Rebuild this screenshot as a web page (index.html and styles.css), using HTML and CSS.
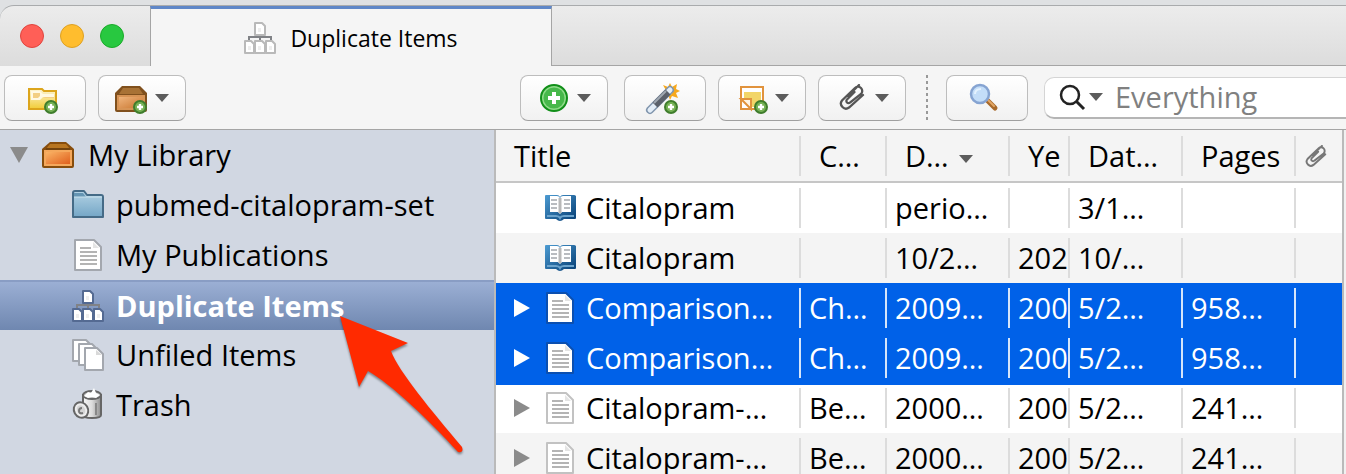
FILE: index.html
```html
<!DOCTYPE html>
<html lang="en">
<head>
    <meta charset="UTF-8">
    <meta name="viewport" content="width=device-width, initial-scale=1.0">
    <title>Duplicate Items</title>
    <link rel="stylesheet" href="styles.css">
</head>
<body>
    <!-- Shared icons -->
    <svg class="sprite" aria-hidden="true">
        <defs>
            <linearGradient id="g-orange" x1="0" y1="0" x2="1" y2="1">
                <stop offset="0" stop-color="#fbb466"/><stop offset="1" stop-color="#df5f1c"/>
            </linearGradient>
            <linearGradient id="g-brown" x1="0" y1="0" x2="1" y2="1">
                <stop offset="0" stop-color="#efb47c"/><stop offset="1" stop-color="#c9762f"/>
            </linearGradient>
            <linearGradient id="g-blue" x1="0" y1="0" x2="0" y2="1">
                <stop offset="0" stop-color="#b4d3e5"/><stop offset="1" stop-color="#74a6c6"/>
            </linearGradient>
            <linearGradient id="g-book" x1="0" y1="0" x2="1" y2="1">
                <stop offset="0" stop-color="#4c9bd2"/><stop offset="1" stop-color="#063e74"/>
            </linearGradient>
            <linearGradient id="g-yellow" x1="0" y1="0" x2="0" y2="1">
                <stop offset="0" stop-color="#fdf6d8"/><stop offset="1" stop-color="#f1cc35"/>
            </linearGradient>
            <linearGradient id="g-metal" x1="0" y1="0" x2="1" y2="0">
                <stop offset="0" stop-color="#f7f7f7"/><stop offset="0.5" stop-color="#dcdcdc"/><stop offset="1" stop-color="#8e8e8e"/>
            </linearGradient>
        </defs>
        <symbol id="badge" viewBox="0 0 14 14">
            <circle cx="7" cy="7" r="6" fill="#76b255" stroke="#3f7d2c" stroke-width="2"/>
            <path d="M7 4v6M4 7h6" stroke="#fff" stroke-width="2.4"/>
        </symbol>
        <symbol id="doc" viewBox="0 0 32 32">
            <path d="M3 1h19l7 7v23H3z" fill="#fff" stroke="currentColor" stroke-width="2" stroke-linejoin="round"/>
            <path d="M21 3v6h6z" fill="#e4e4e4"/>
            <path d="M8 9h11M8 13h17M8 17h17M8 21h17M8 25h17" stroke="#b4b4b4" stroke-width="1.8"/>
        </symbol>
        <symbol id="duplicates" viewBox="0 0 32 32">
            <path d="M5 19v-4h22v4M16 12v7" fill="none" stroke="#808286" stroke-width="2"/>
            <g fill="#fff" stroke="currentColor" stroke-width="2" stroke-linejoin="round">
                <path d="M11 1h7l3 3v9H11z"/>
                <path d="M1 19h6l3 3v9H1z"/>
                <path d="M11 19h7l3 3v9H11z"/>
                <path d="M22 19h6l3 3v9h-9z"/>
            </g>
            <path d="M14 6h3v4h-3zM4 24h3v4H4zM14 24h3v4h-3zM25 24h3v4h-3z" fill="#eee"/>
        </symbol>
        <symbol id="book" viewBox="0 0 32 28">
            <path d="M1 2q0-1 1-1h11q2 0 3 2 1-2 3-2h11q1 0 2 1v22q0 1-1 1H20q-2 2-4 2t-4-2H2q-1 0-1-1z" fill="url(#g-book)"/>
            <path d="M6 2h7q2 0 3 2 1-2 3-2h8v16h-9l-2 2-2-2H6z" fill="#fff"/>
            <path d="M16 4v15" stroke="#b8b8b8" stroke-width="3"/>
            <path d="M7 6h6M7 10h6M7 14h6M20 6h6M20 10h6M20 14h6" stroke="#b9bcc0" stroke-width="2"/>
            <path d="M3 22h9q3 0 4 2 1-2 4-2h10" fill="none" stroke="#6ca4cd" stroke-width="2"/>
        </symbol>
        <symbol id="clip" viewBox="0 0 26 26">
            <path d="M15.500 8 8 15.500a2 2 0 0 0 3 3L22 10a4 4 0 0 0-6-6L3 16.500a5 5 0 0 0 7 7L24 11M20 1 9 12" fill="none" stroke="currentColor" stroke-width="2.300" stroke-linecap="round"/>
        </symbol>
        <symbol id="down" viewBox="0 0 14 8">
            <path d="M0 0h14L7 8z" fill="currentColor"/>
        </symbol>
    </svg>

    <header class="titlebar">
        <div class="window-controls">
            <button class="light close" aria-label="Close"></button>
            <button class="light minimize" aria-label="Minimize"></button>
            <button class="light maximize" aria-label="Zoom"></button>
        </div>
        <button class="tab">
            <svg class="icon tab-icon"><use href="#duplicates"/></svg>
            Duplicate Items
        </button>
        <div class="tab-rest"></div>
    </header>

    <div class="toolbar">
        <div class="toolbar-left">
            <button class="tool" aria-label="New Collection">
                <svg class="icon" viewBox="0 0 32 32">
                    <path d="M0 7h13l2 2h12v18H0z" fill="url(#g-yellow)" stroke="#dca51c" stroke-width="2"/>
                    <path d="M2 9h9l3 3h11v3H14l-3 3H2z" fill="#fff9e2"/>
                    <path d="M4 11h7v3l-2 2H4zM14 16h11v-1H16z" fill="#f3cf83"/>
                    <use href="#badge" x="15" y="18" width="14" height="14"/>
                </svg>
            </button>
            <button class="tool tool-menu" aria-label="New Library">
                <svg class="icon" viewBox="0 0 32 32">
                    <path d="M7 4h18l7 7v17q0 2-2 2H2q-2 0-2-2V11z" fill="#80501d"/>
                    <path d="M8 6h16l4 6H4z" fill="#a87235"/>
                    <path d="M2 13h28v15H2z" fill="#d79455"/>
                    <path d="M4 15h24v11H4z" fill="url(#g-brown)"/>
                    <use href="#badge" x="18" y="18" width="14" height="14"/>
                </svg>
                <svg class="arrow"><use href="#down"/></svg>
            </button>
        </div>
        <div class="toolbar-right">
            <button class="tool tool-menu" aria-label="New Item">
                <svg class="icon" viewBox="0 0 32 32">
                    <circle cx="17" cy="16" r="13" fill="#8edb88" stroke="#118f19" stroke-width="2"/>
                    <circle cx="17" cy="16" r="10.500" fill="#47b84b"/>
                    <path d="M17 10v12M11 16h12" stroke="#fff" stroke-width="4"/>
                </svg>
                <svg class="arrow"><use href="#down"/></svg>
            </button>
            <button class="tool" aria-label="Add Item by Identifier">
                <svg class="icon" viewBox="0 0 32 32">
                    <path d="M14 3l5 2 2-4 2 4 5-3-1 5 4 2-4 2 2 5-6-2-2 4-2-6z" fill="#f7a81c"/>
                    <path d="M19 5l4-1 2 4-3 5z" fill="#ffe35b"/>
                    <path d="M1 28 21 8" stroke="#8095ad" stroke-width="8" stroke-linecap="round"/>
                    <path d="M1 28 21 8" stroke="#e4eef8" stroke-width="5" stroke-linecap="round"/>
                    <path d="M6 23 19 10" stroke="#5b616b" stroke-width="7"/>
                    <path d="M5 21 17 9" stroke="#a0a8b2" stroke-width="2"/>
                    <use href="#badge" x="15" y="18" width="14" height="14"/>
                </svg>
            </button>
            <button class="tool tool-menu" aria-label="New Note">
                <svg class="icon" viewBox="0 0 32 32">
                    <path d="M6 5h22v22H6z" fill="#fff" stroke="#e1933d" stroke-width="2"/>
                    <path d="M9 10h17v15H17V17H9z" fill="#f2d568"/>
                    <path d="M6 17h10v10z" fill="#fff4e2" stroke="#e1933d" stroke-width="2"/>
                    <use href="#badge" x="19" y="18" width="14" height="14"/>
                </svg>
                <svg class="arrow"><use href="#down"/></svg>
            </button>
            <button class="tool tool-menu" aria-label="Add Attachment">
                <svg class="icon dark" viewBox="0 0 32 32"><use href="#clip" x="4" y="2" width="26" height="26"/></svg>
                <svg class="arrow"><use href="#down"/></svg>
            </button>
            <div class="separator"></div>
            <button class="tool" aria-label="Advanced Search">
                <svg class="icon" viewBox="0 0 32 32">
                    <path d="m16 18 8 8" stroke="#a86a2c" stroke-width="5" stroke-linecap="round"/>
                    <path d="m17 18 6 6" stroke="#e3a765" stroke-width="2" stroke-linecap="round"/>
                    <circle cx="9" cy="12" r="9" fill="#c3ddf8" stroke="#86a4d2" stroke-width="2.500"/>
                    <path d="M4 12q0-5 6-5" fill="none" stroke="#e4f2ff" stroke-width="2"/>
                </svg>
            </button>
            <label class="search">
                <svg class="search-icon" viewBox="0 0 26 26">
                    <circle cx="11" cy="11" r="9" fill="none" stroke="#222" stroke-width="2.500"/>
                    <path d="m17 17 8 8" stroke="#222" stroke-width="3"/>
                </svg>
                <svg class="arrow"><use href="#down"/></svg>
                <input class="search-input" type="text" placeholder="Everything" aria-label="Search">
            </label>
        </div>
    </div>

    <main class="panes">
        <nav class="sidebar">
            <a class="source root" href="#">
                <svg class="twisty" viewBox="0 0 18 16"><path d="M0 0h18L9 16z" fill="#8b8b8b"/></svg>
                <svg class="icon" viewBox="0 0 32 32">
                    <path d="M8 3h16l8 7v17q0 2-2 2H2q-2 0-2-2V10z" fill="#874d0c"/>
                    <path d="M8 5h16l4 5H4z" fill="#b8751f"/>
                    <path d="M2 11h28v16H2z" fill="#f5a85c"/>
                    <path d="M4 13h24v12H4z" fill="url(#g-orange)"/>
                    <path d="M4 9h24v2H4z" fill="#73420b"/>
                </svg>
                My Library
            </a>
            <a class="source" href="#">
                <svg class="icon" viewBox="0 0 32 32">
                    <path d="M1 28V4q0-2 2-2h9l3 4h14q2 0 2 2v20z" fill="url(#g-blue)" stroke="#456b87" stroke-width="2" stroke-linejoin="round"/>
                    <path d="M2 4h9l3 4H2z" fill="#6595b3"/>
                    <path d="M2 8h28" stroke="#cbe2ee"/>
                </svg>
                pubmed-citalopram-set
            </a>
            <a class="source" href="#">
                <svg class="icon doc-gray"><use href="#doc"/></svg>
                My Publications
            </a>
            <a class="source selected" href="#" aria-current="page">
                <svg class="icon"><use href="#duplicates"/></svg>
                Duplicate Items
            </a>
            <a class="source" href="#">
                <svg class="icon" viewBox="0 0 32 32">
                    <g fill="#fff" stroke="#a3a7ae" stroke-width="2" stroke-linejoin="round">
                        <path d="M1 1h13l5 5v16H1z"/>
                        <path d="M7 5h13l5 5v16H7z"/>
                        <path d="M13 9h12l6 6v16H13z"/>
                    </g>
                    <path d="M24 11v5h6z" fill="#d9d9d9"/>
                </svg>
                Unfiled Items
            </a>
            <a class="source" href="#">
                <svg class="icon" viewBox="0 0 32 32">
                    <path d="M11 6v20q0 3 9 3t9-3V6z" fill="url(#g-metal)" stroke="#666" stroke-width="2"/>
                    <ellipse cx="20" cy="6" rx="9" ry="4" fill="#bbb" stroke="#666" stroke-width="2"/>
                    <path d="m12 7 4-4 3 1 3-5 2 5 4 2-4 3-4-1-4 1z" fill="#fff"/>
                    <path d="M24 14v12" stroke="#888" stroke-width="2"/>
                    <ellipse cx="9" cy="21" rx="7" ry="8" transform="rotate(-30 9 21)" fill="#eee" stroke="#666" stroke-width="2"/>
                    <ellipse cx="9" cy="21" rx="4" ry="5" transform="rotate(-30 9 21)" fill="#d5d5d5"/>
                    <path d="M10 19q-3 0-3 3t4 2" fill="none" stroke="#777" stroke-width="2"/>
                </svg>
                Trash
            </a>
            <svg class="pointer" viewBox="0 0 130 144">
                <path d="M3 4 71 31 54 39C62 60 94 98 125 135Q127 141 121 140 C92 108 54 72 31 59L22 75z" fill="#ff2a00"/>
            </svg>
        </nav>

        <section class="items">
            <table>
                <colgroup>
                    <col>
                    <col class="col-creator">
                    <col class="col-date">
                    <col class="col-year">
                    <col class="col-added">
                    <col class="col-pages">
                    <col class="col-clip">
                </colgroup>
                <thead>
                    <tr>
                        <th>Title</th>
                        <th>C…</th>
                        <th>D…<svg class="arrow sort"><use href="#down"/></svg></th>
                        <th>Ye</th>
                        <th>Dat…</th>
                        <th>Pages</th>
                        <th class="clip-head"><svg class="clip-icon" role="img" aria-label="Attachments"><use href="#clip"/></svg></th>
                    </tr>
                </thead>
                <tbody>
                    <tr>
                        <td><div class="title"><span class="expander"></span><svg class="icon book"><use href="#book"/></svg>Citalopram</div></td>
                        <td></td>
                        <td>perio…</td>
                        <td></td>
                        <td>3/1…</td>
                        <td></td>
                        <td></td>
                    </tr>
                    <tr>
                        <td><div class="title"><span class="expander"></span><svg class="icon book"><use href="#book"/></svg>Citalopram</div></td>
                        <td></td>
                        <td>10/2…</td>
                        <td>202</td>
                        <td>10/…</td>
                        <td></td>
                        <td></td>
                    </tr>
                    <tr class="selected">
                        <td><div class="title"><button class="expander" aria-label="Expand"><svg viewBox="0 0 16 18"><path d="M0 0v18l16-9z"/></svg></button><svg class="icon"><use href="#doc"/></svg>Comparison…</div></td>
                        <td>Ch…</td>
                        <td>2009…</td>
                        <td>200</td>
                        <td>5/2…</td>
                        <td>958…</td>
                        <td></td>
                    </tr>
                    <tr class="selected">
                        <td><div class="title"><button class="expander" aria-label="Expand"><svg viewBox="0 0 16 18"><path d="M0 0v18l16-9z"/></svg></button><svg class="icon"><use href="#doc"/></svg>Comparison…</div></td>
                        <td>Ch…</td>
                        <td>2009…</td>
                        <td>200</td>
                        <td>5/2…</td>
                        <td>958…</td>
                        <td></td>
                    </tr>
                    <tr>
                        <td><div class="title"><button class="expander" aria-label="Expand"><svg viewBox="0 0 16 18"><path d="M0 0v18l16-9z"/></svg></button><svg class="icon"><use href="#doc"/></svg>Citalopram-…</div></td>
                        <td>Be…</td>
                        <td>2000…</td>
                        <td>200</td>
                        <td>5/2…</td>
                        <td>241…</td>
                        <td></td>
                    </tr>
                    <tr>
                        <td><div class="title"><button class="expander" aria-label="Expand"><svg viewBox="0 0 16 18"><path d="M0 0v18l16-9z"/></svg></button><svg class="icon"><use href="#doc"/></svg>Citalopram-…</div></td>
                        <td>Be…</td>
                        <td>2000…</td>
                        <td>200</td>
                        <td>5/2…</td>
                        <td>241…</td>
                        <td></td>
                    </tr>
                </tbody>
            </table>
        </section>
    </main>
</body>
</html>
```
FILE: styles.css
```css
* { box-sizing: border-box; }

body {
    margin: 0;
    height: 100vh;
    overflow: hidden;
    display: flex;
    flex-direction: column;
    padding-top: 5px;
    background: #dfe1e3;
    color: #000;
    font-family: "Open Sans", "Noto Sans", sans-serif;
    font-size: 29px;
    line-height: 40px;
}

button {
    margin: 0;
    padding: 0;
    border: none;
    background: none;
    color: inherit;
    font: inherit;
}

svg { flex: none; overflow: visible; }

.sprite { position: absolute; width: 0; height: 0; }

.icon { width: 32px; height: 32px; }

.arrow { width: 14px; height: 8px; color: #5c5c5c; }

.dark { color: #555; }

/* Title bar */
.titlebar {
    display: flex;
    flex: none;
    height: 61px;
    border-top: 1px solid #a9abad;
    border-top-left-radius: 14px;
    background: linear-gradient(#ececec, #dcdcdc);
    overflow: hidden;
}

.window-controls {
    display: flex;
    align-items: center;
    gap: 16px;
    width: 150px;
    padding-left: 20px;
}

.light {
    width: 24px;
    height: 24px;
    border: 1px solid #e0443e;
    border-radius: 50%;
    background: #ff5f57;
}

.minimize { border-color: #dea123; background: #ffbd2e; }

.maximize { border-color: #1aab29; background: #28c840; }

.tab {
    display: flex;
    align-items: center;
    justify-content: center;
    gap: 14px;
    width: 402px;
    border: 1px solid #a5a5a5;
    border-top: 3px solid #5f87c8;
    border-bottom: none;
    background: #f5f5f5;
    font-size: 23px;
    line-height: 32px;
}

.tab-icon { color: #b9b9b9; }

.tab-rest { flex: 1; border-bottom: 1px solid #a5a5a5; }

/* Toolbar */
.toolbar {
    display: flex;
    flex: none;
    height: 64px;
    border-bottom: 1px solid #a5a5a5;
    background: #f5f5f5;
}

.toolbar-left, .toolbar-right {
    display: flex;
    align-items: center;
    gap: 12px;
}

.toolbar-left { flex: none; width: 496px; padding-left: 4px; }

.toolbar-right { flex: 1; min-width: 0; padding-left: 24px; }

.tool {
    display: flex;
    flex: none;
    align-items: center;
    justify-content: center;
    gap: 8px;
    width: 82px;
    height: 46px;
    border: 1px solid #bdbdbd;
    border-bottom-color: #a0a0a0;
    border-radius: 8px;
    background: linear-gradient(#fff, #f1f1f1);
}

.tool-menu { width: 88px; }

.toolbar-right .tool:first-child { margin-right: 4px; }

.separator {
    width: 2px;
    height: 46px;
    margin: 0 6px 0 8px;
    background: repeating-linear-gradient(#999 0 3px, transparent 3px 6px);
}

.search {
    display: flex;
    flex: 1;
    align-items: center;
    gap: 4px;
    min-width: 0;
    height: 42px;
    margin-left: 4px;
    padding-left: 14px;
    border: 1px solid #d5d5d5;
    border-right: none;
    border-bottom: 2px solid #b5b5b5;
    border-radius: 10px 0 0 10px;
    background: #fff;
}

.search-icon { width: 26px; height: 26px; }

.search-input {
    flex: 1;
    min-width: 0;
    height: 40px;
    padding: 0 8px;
    border: none;
    outline: none;
    background: none;
    font: inherit;
}

.search-input::placeholder { color: #808080; opacity: 1; }

.panes {
    display: flex;
    flex: 1;
    min-height: 0;
    padding-right: 2px;
    background: #f1f1f1;
}

/* Sources */
.sidebar {
    position: relative;
    flex: none;
    width: 496px;
    border-right: 2px solid #bababa;
    background: #d1d7e2;
}

.source {
    display: flex;
    align-items: center;
    gap: 12px;
    height: 50px;
    padding-left: 72px;
    color: #000;
    text-decoration: none;
    white-space: nowrap;
}

.source.root { gap: 14px; padding-left: 10px; }

.source.selected {
    border-top: 2px solid #899dc4;
    background: linear-gradient(#9bafd4, #6f87b0);
    color: #fff;
    font-weight: bold;
}

.source.selected .icon { color: #546a92; }

.twisty { width: 18px; height: 16px; }

.doc-gray { color: #a3a7ae; }

/* Callout arrow, drawn over the list */
.pointer {
    position: absolute;
    left: 337px;
    top: 182px;
    width: 130px;
    height: 144px;
    filter: drop-shadow(0 2px 1px rgba(0, 0, 0, 0.4));
}

/* Items */
.items {
    flex: 1;
    min-width: 0;
    overflow: hidden;
    border-right: 2px solid #bababa;
    background: #fff;
}

table {
    width: 100%;
    table-layout: fixed;
    border-collapse: separate;
    border-spacing: 0;
}

.col-creator { width: 86px; }
.col-date { width: 123px; }
.col-year { width: 60px; }
.col-added, .col-pages { width: 113px; }
.col-clip { width: 48px; }

th, td {
    height: 50px;
    padding: 0 0 0 10px;
    text-align: left;
    font-weight: normal;
    white-space: nowrap;
    background: linear-gradient(#dcdcdc, #dcdcdc) left center / 2px 40px no-repeat;
}

th {
    height: 53px;
    padding-left: 20px;
    border-bottom: 2px solid #c6c6c6;
}

th:first-child, td:first-child { padding-left: 18px; background: none; }

thead tr, tbody tr:nth-child(even) { background: #f4f4f4; }

tbody tr.selected { background: #0061e8; color: #fff; }

.selected td:not(:first-child) { background-image: linear-gradient(#d5e5fa, #d5e5fa); }

tr.selected + tr:not(.selected) td { box-shadow: inset 0 2px #0061e8; }

.sort { margin-left: 10px; vertical-align: middle; }

.clip-head { padding-left: 11px; }

.clip-icon { display: block; width: 22px; height: 22px; color: #777; }

.title { display: flex; align-items: center; gap: 10px; }

.title .icon { color: #c2c2c2; }

.selected .title .icon { color: #0b4fb0; }

.title .book { height: 28px; }

.expander { display: flex; width: 20px; }

.expander svg { width: 16px; height: 18px; fill: #8b8b8b; }

.selected .expander svg { fill: #fff; }
```
